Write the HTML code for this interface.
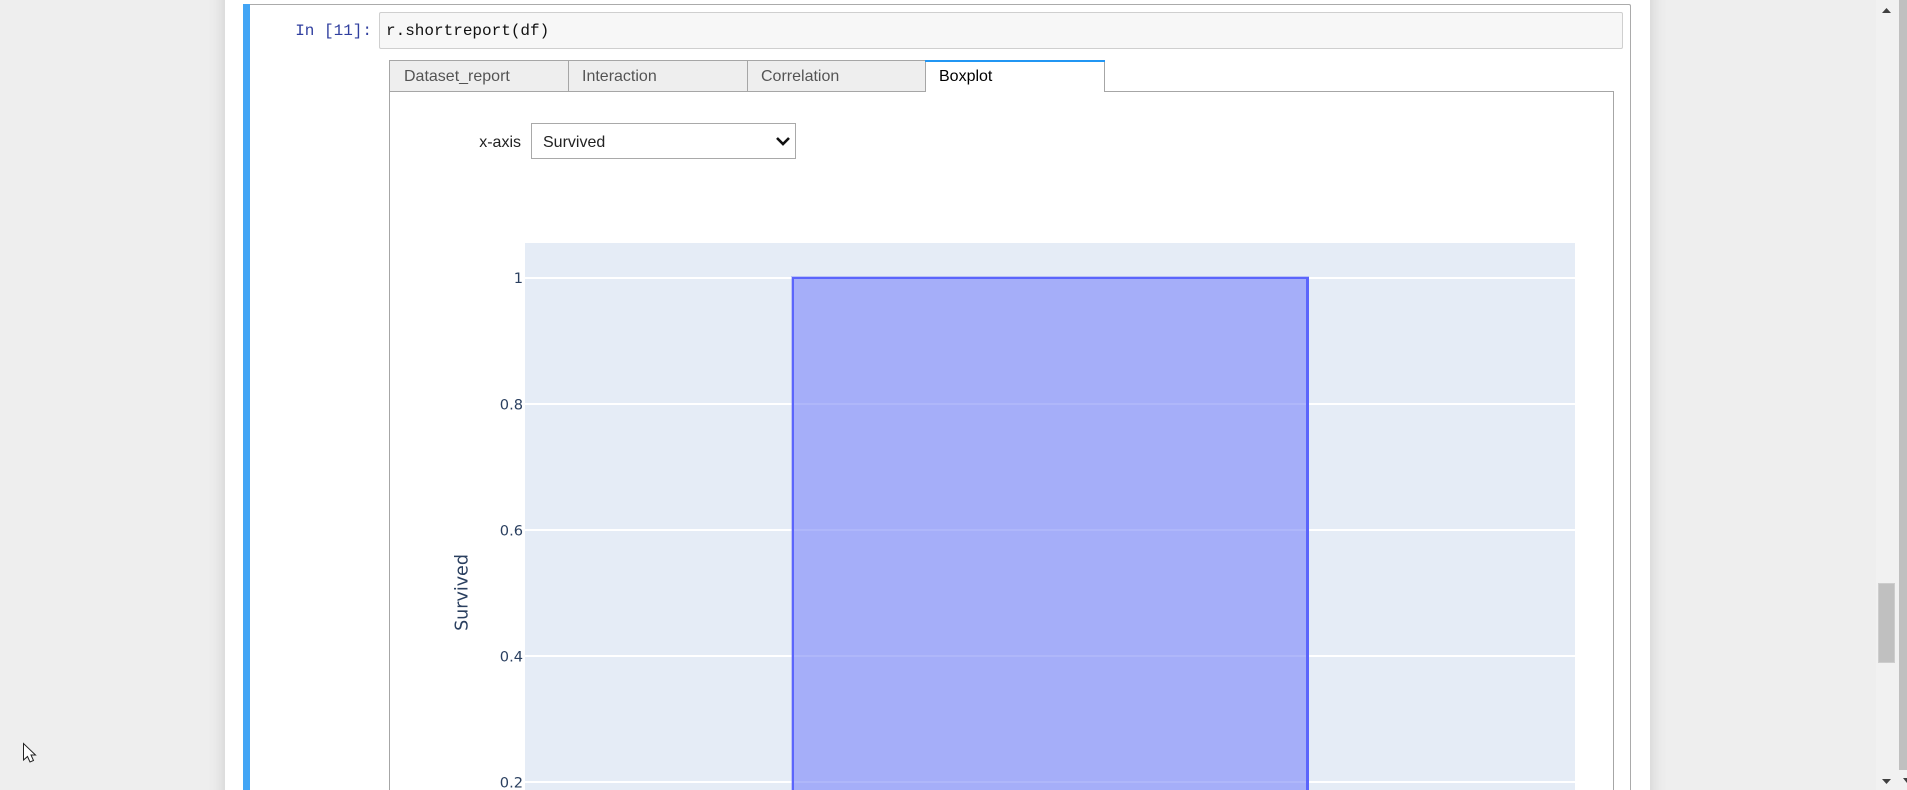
<!DOCTYPE html>
<html lang="en">
<head>
<meta charset="utf-8">
<title>Notebook</title>
<style>
html,body{margin:0;padding:0;width:1907px;height:790px;overflow:hidden;background:#eeeeee;font-family:"Liberation Sans",sans-serif}
#root{position:absolute;left:0;top:0;width:1907px;height:790px;overflow:hidden;background:#eeeeee}
.a{position:absolute;box-sizing:border-box}
#nb{left:225px;top:-30px;width:1425px;height:850px;background:#fff;box-shadow:0 0 15px 1px rgba(87,87,87,.2)}
#cell{left:243px;top:4px;width:1388px;height:786px;border:1px solid #ababab;border-left:0;border-bottom:0;background:#fff;border-top-right-radius:2px}
#bar{left:243px;top:4px;width:7px;height:786px;background:#42a5f5}
#prompt{left:250px;top:19px;width:122px;text-align:right;font:16px/24px "Liberation Mono",monospace;color:#303f9f;white-space:pre}
#input{left:379px;top:12px;width:1244px;height:37px;background:#f7f7f7;border:1px solid #cfcfcf;border-radius:2px;font:16px/36px "Liberation Mono",monospace;color:#111;padding-left:6px;white-space:pre}
.tab{top:60px;height:32px;width:180px;background:#eeeeee;border:1px solid #a6a6a6;font-size:16px;line-height:32px;padding-left:13px;color:rgba(0,0,0,.65);white-space:nowrap}
#panel{left:389px;top:91px;width:1225px;height:699px;border:1px solid #a6a6a6;border-bottom:0;background:#fff}
#active{left:925px;top:60px;width:180px;height:32px;background:#fff;border:1px solid #a6a6a6;border-top:0;border-bottom:0;font-size:16px;line-height:34px;padding-left:13px;color:#000;white-space:nowrap}
#activeTop{left:925px;top:60px;width:180px;height:2px;background:#2196f3}
#xlabel{left:440px;top:133px;width:81px;text-align:right;font-size:16px;line-height:20px;color:#222}
#select{left:531px;top:123px;width:265px;height:36px;border:1px solid #a9a9a9;background:#fff;font-size:16px;line-height:37px;padding-left:11px;color:#222}
#sb1{left:1876px;top:0;width:23px;height:790px;background:#f1f1f1}
#thumb1{left:1878px;top:583px;width:17px;height:80px;background:#c0c0c0;border:1px solid #cdcdcd}
#sb2{left:1899px;top:0;width:8px;height:790px;background:#f1f1f1}
#thumb2{left:1899px;top:0;width:8px;height:770px;background:#c0c0c0}
svg{position:absolute;left:0;top:0}
</style>
</head>
<body>
<div id="root">
<div class="a" id="nb"></div>
<div class="a" id="cell"></div>
<div class="a" id="bar"></div>
<div class="a" id="prompt">In [11]:</div>
<div class="a" id="input">r.shortreport(df)</div>

<div class="a" id="panel"></div>
<div class="a tab" style="left:389px;padding-left:14px">Dataset_report</div>
<div class="a tab" style="left:568px">Interaction</div>
<div class="a tab" style="left:747px;width:179px">Correlation</div>
<div class="a" id="active">Boxplot</div>
<div class="a" id="activeTop"></div>

<div class="a" id="xlabel">x-axis</div>
<div class="a" id="select">Survived</div>

<svg width="1907" height="790" viewBox="0 0 1907 790" xmlns="http://www.w3.org/2000/svg">
  <!-- select chevron -->
  <path d="M777 138 L783 144 L789 138" fill="none" stroke="#111" stroke-width="2.6"/>
  <!-- plot area -->
  <rect x="525" y="243" width="1050" height="547" fill="#e5ecf6"/>
  <g fill="#ffffff" shape-rendering="crispEdges">
    <rect x="525" y="277" width="1050" height="2"/>
    <rect x="525" y="403" width="1050" height="2"/>
    <rect x="525" y="529" width="1050" height="2"/>
    <rect x="525" y="655" width="1050" height="2"/>
    <rect x="525" y="781" width="1050" height="2"/>
  </g>
  <!-- box -->
  <g shape-rendering="crispEdges">
    <rect x="791" y="276" width="518" height="514" fill="#5f6afa" fill-opacity=".32"/>
    <rect x="792" y="277" width="517" height="513" fill="#5b65fc"/>
    <rect x="794" y="279" width="512" height="511" fill="#a5aef9"/>
    <g fill="#afb7fa">
      <rect x="794" y="403" width="512" height="2"/>
      <rect x="794" y="529" width="512" height="2"/>
      <rect x="794" y="655" width="512" height="2"/>
      <rect x="794" y="781" width="512" height="2"/>
    </g>
  </g>
  <!-- tick labels -->
  <g font-family="'DejaVu Sans',sans-serif" font-size="14.6" fill="#2a3f5f" text-anchor="end">
    <text x="523" y="283">1</text>
    <text x="523" y="409.5">0.8</text>
    <text x="523" y="535.5">0.6</text>
    <text x="523" y="661.5">0.4</text>
    <text x="523" y="787.5">0.2</text>
  </g>
  <text transform="translate(467.5 592.5) rotate(-90)" font-family="'DejaVu Sans',sans-serif" font-size="17.5" fill="#2a3f5f" text-anchor="middle">Survived</text>
</svg>

<div class="a" id="sb1"></div>
<div class="a" id="thumb1"></div>
<div class="a" id="sb2"></div>
<div class="a" id="thumb2"></div>

<svg width="1907" height="790" viewBox="0 0 1907 790" xmlns="http://www.w3.org/2000/svg">
  <path d="M1886.5 8 L1891 13 L1882 13 Z" fill="#404040"/>
  <path d="M1882 779 L1891 779 L1886.5 784 Z" fill="#404040"/>
  <path d="M1903 778 L1907 778 L1907 783 Z" fill="#404040"/>
  <!-- cursor -->
  <path d="M23.5 743.5 L23.5 760 L27.5 756.5 L30 762 L33.5 760.5 L31 755 L35.5 755 Z" fill="#fff" stroke="#222" stroke-width="1" stroke-linejoin="miter"/>
</svg>
</div>
</body>
</html>
